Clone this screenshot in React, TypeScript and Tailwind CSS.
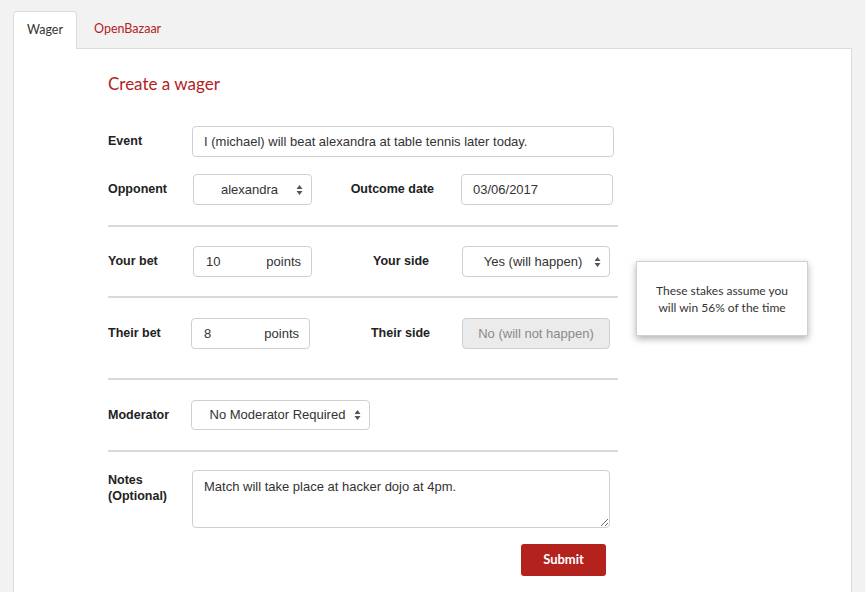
import React from 'react';

const label = "font-['Liberation_Sans',Arial,sans-serif] font-bold text-[12.5px] text-[#222]";
const field =
  "h-[31px] border border-[#cfcfcf] rounded-[4px] font-['Liberation_Sans',Arial,sans-serif] text-[13px] flex items-center";

const Arrows = () => (
  <svg width="7" height="11" viewBox="0 0 7 11" className="absolute right-[8px] top-1/2 -translate-y-1/2">
    <path d="M3.5 0.5 L6.5 4.5 L0.5 4.5 Z" fill="#555" />
    <path d="M3.5 10.5 L6.5 6.5 L0.5 6.5 Z" fill="#555" />
  </svg>
);

const Select: React.FC<{ value: string; className: string }> = ({ value, className }) => (
  <div className={`${field} bg-white text-[#333] relative justify-center pl-[16px] pr-[22px] ${className}`}>
    <span className="whitespace-nowrap">{value}</span>
    <Arrows />
  </div>
);

const Points: React.FC<{ value: string; className: string }> = ({ value, className }) => (
  <div className={`${field} bg-white text-[#333] justify-between pl-[12px] pr-[10px] ${className}`}>
    <span>{value}</span>
    <span>points</span>
  </div>
);

const Rule = ({ className }: { className: string }) => (
  <div className={`w-[510px] border-t-2 border-[#dadada] ${className}`} />
);

export default function App() {
  return (
    <div className="w-[865px] h-[592px] overflow-hidden bg-[#f2f2f2] pt-[12px] px-[13px] font-['Lato',sans-serif]">
      <div className="flex items-end h-[37px] border-b border-[#dcdcdc] w-[839px]">
        <div className="h-[38px] -mb-px w-[64px] bg-white border border-b-0 border-[#dcdcdc] rounded-t-[4px] flex items-center justify-center text-[12.5px] text-[#333]">
          Wager
        </div>
        <div className="h-[37px] flex items-center ml-[17px] text-[12.5px] text-[#b3221d]">OpenBazaar</div>
      </div>
      <div className="relative w-[839px] h-[560px] bg-white border-x border-[#dcdcdc] pt-[23px] pl-[94px]">
        <h1 className="text-[17px] leading-[24px] text-[#b3221d]">Create a wager</h1>

        <div className="flex items-center mt-[30px]">
          <div className={`${label} w-[84px]`}>Event</div>
          <div className={`${field} bg-white text-[#333] w-[422px] px-[11px]`}>
            I (michael) will beat alexandra at table tennis later today.
          </div>
        </div>

        <div className="flex items-center mt-[17px]">
          <div className={`${label} w-[85px]`}>Opponent</div>
          <Select value="alexandra" className="w-[119px]" />
          <div className={`${label} w-[122px] text-right`}>Outcome date</div>
          <div className={`${field} bg-white text-[#333] ml-[27px] w-[152px] px-[11px]`}>03/06/2017</div>
        </div>

        <Rule className="mt-[20px]" />

        <div className="flex items-center mt-[19px]">
          <div className={`${label} w-[85px]`}>Your bet</div>
          <Points value="10" className="w-[119px]" />
          <div className={`${label} w-[117px] text-right`}>Your side</div>
          <Select value="Yes (will happen)" className="ml-[33px] w-[148px]" />
        </div>

        <Rule className="mt-[19px]" />

        <div className="flex items-center mt-[20px]">
          <div className={`${label} w-[83px]`}>Their bet</div>
          <Points value="8" className="w-[119px]" />
          <div className={`${label} w-[120px] text-right`}>Their side</div>
          <div className={`${field} ml-[32px] w-[148px] justify-center bg-[#ebebeb] text-[#8a8a8a]`}>
            No (will not happen)
          </div>
        </div>

        <Rule className="mt-[29px]" />

        <div className="flex items-center mt-[20px]">
          <div className={`${label} w-[83px]`}>Moderator</div>
          <Select value="No Moderator Required" className="w-[179px] !h-[30px]" />
        </div>

        <Rule className="mt-[20px]" />

        <div className="flex items-start mt-[18px]">
          <div className={`${label} w-[84px] leading-[16px] pt-[2px]`}>
            Notes
            <br />
            (Optional)
          </div>
          <textarea
            readOnly
            value="Match will take place at hacker dojo at 4pm."
            className="w-[418px] h-[58px] border border-[#cfcfcf] rounded-[4px] px-[11px] pt-[6px] font-['Liberation_Sans',Arial,sans-serif] text-[13px] text-[#333] outline-none"
          />
        </div>

        <div className="w-[498px] flex justify-end mt-[16px]">
          <button className="w-[85px] h-[32px] rounded-[3px] bg-[#b3221d] text-white font-bold text-[13px]">Submit</button>
        </div>

        <div className="absolute left-[622px] top-[212px] w-[172px] h-[75px] bg-white border border-[#d0d0d0] shadow-[0_3px_7px_rgba(0,0,0,0.3)] flex items-center justify-center text-center text-[12px] leading-[17px] text-[#333]">
          These stakes assume you
          <br />
          will win 56% of the time
        </div>
      </div>
    </div>
  );
}
